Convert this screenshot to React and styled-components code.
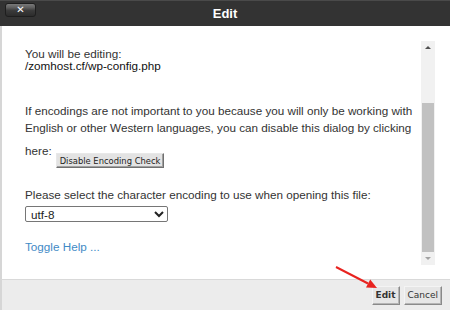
import React from "react";
import styled, { createGlobalStyle } from "styled-components";

const GlobalStyle = createGlobalStyle`
  html, body {
    margin: 0;
    padding: 0;
    background: #fff;
  }
  body {
    font-family: "Liberation Sans", Arial, sans-serif;
  }
`;

const Dialog = styled.div`
  position: relative;
  width: 450px;
  height: 310px;
  display: flex;
  flex-direction: column;
  overflow: hidden;
`;

const Header = styled.div`
  height: 26px;
  background: #333;
  border-top: 1px solid #4a4a4a;
  box-sizing: border-box;
  display: grid;
  grid-template-columns: 1fr auto 1fr;
  align-items: start;
  padding: 2px 5px 0;
`;

const CloseButton = styled.button`
  width: 31px;
  height: 14px;
  padding: 0;
  border: 1px solid #1e1e1e;
  border-radius: 3px;
  background: linear-gradient(#7a7a7a 0%, #5e5e5e 30%, #3a3a3a 55%, #2c2c2c 100%);
  color: #fff;
  font-family: "DejaVu Sans", sans-serif;
  font-weight: bold;
  font-size: 10px;
  line-height: 12px;
  display: flex;
  align-items: center;
  justify-content: center;
  justify-self: start;
`;

const Title = styled.div`
  color: #fff;
  font-weight: bold;
  font-size: 13px;
  line-height: 22px;
`;

const Body = styled.div`
  height: 253px;
  box-sizing: border-box;
  display: flex;
  border-left: 2px solid #d6d6d6;
  padding: 15px 15px 14px 23px;
  background: #fff;
`;

const Content = styled.div`
  flex: 1;
  padding-top: 7px;
  color: #333;
  font-size: 11.7px;
  line-height: 16.7px;
`;

const FileInfo = styled.div`
  line-height: 12px;
`;

const FilePath = styled.div`
  color: #111;
`;

const Para = styled.p`
  margin: ${(p) => p.$top}px 0 0;
`;

const SmallButton = styled.button`
  font-family: "DejaVu Sans", sans-serif;
  font-size: 8.4px;
  color: #222;
  height: 15px;
  padding: 0 3px;
  margin: 17px 0 0 4px;
  vertical-align: -9px;
  background: #e3e3e3;
  border: 1px solid;
  border-color: #e8e8e8 #707070 #707070 #e8e8e8;
  box-shadow: inset -1px -1px 0 #a0a0a0;
`;

const Select = styled.select`
  display: block;
  margin-top: 2px;
  width: 143px;
  height: 16px;
  font-family: "Liberation Sans", Arial, sans-serif;
  font-size: 11.7px;
  color: #222;
  border: 1px solid #767676;
  border-radius: 2px;
  padding: 0 1px;
  background: #fff;
`;

const HelpLink = styled.a`
  display: inline-block;
  margin-top: 17px;
  color: #3f8ac6;
  text-decoration: none;
`;

const ScrollBar = styled.div`
  width: 14px;
  background: #f1f1f1;
  display: flex;
  flex-direction: column;
`;

const ScrollArrow = styled.div`
  height: 13px;
  display: flex;
  align-items: center;
  justify-content: center;
  &::before {
    content: "";
    border-left: 3px solid transparent;
    border-right: 3px solid transparent;
    ${(p) =>
      p.$down
        ? "border-top: 3px solid #a3a3a3;"
        : "border-bottom: 3px solid #505050;"}
  }
`;

const Rail = styled.div`
  flex: 1;
  display: flex;
  flex-direction: column;
  padding: 0 1px;
`;

const Thumb = styled.div`
  margin-top: ${(p) => p.$offset}px;
  flex: 1;
  background: #c1c1c1;
`;

const Footer = styled.div`
  flex: 1;
  background: #ececec;
  border-top: 1px solid #d9d9d9;
  border-left: 2px solid #d6d6d6;
  display: flex;
  align-items: center;
  justify-content: flex-end;
  gap: 4px;
  padding-right: 8px;
`;

const FootButton = styled.button`
  height: 19px;
  padding: 0 3px;
  font-family: "DejaVu Sans", sans-serif;
  font-size: 9px;
  font-weight: ${(p) => (p.$primary ? "bold" : "normal")};
  color: #333;
  background: #e6e6e6;
  border: 1px solid;
  border-color: #f4f4f4 #8a8a8a #8a8a8a #f4f4f4;
  box-shadow: inset -1px -1px 0 #b5b5b5;
`;

const Pointer = styled.svg`
  position: absolute;
  left: 0;
  top: 0;
  pointer-events: none;
`;

export default function App() {
  return (
    <>
      <GlobalStyle />
      <Dialog>
        <Header>
          <CloseButton>✕</CloseButton>
          <Title>Edit</Title>
        </Header>
        <Body>
          <Content>
            <FileInfo>
              <div>You will be editing:</div>
              <FilePath>/zomhost.cf/wp-config.php</FilePath>
            </FileInfo>
            <Para $top={31}>
              If encodings are not important to you because you will only be working with
              English or other Western languages, you can disable this dialog by clicking
              here:
              <SmallButton>Disable Encoding Check</SmallButton>
            </Para>
            <Para $top={19}>
              Please select the character encoding to use when opening this file:
            </Para>
            <Select defaultValue="utf-8">
              <option value="utf-8">utf-8</option>
            </Select>
            <HelpLink href="#">Toggle Help ...</HelpLink>
          </Content>
          <ScrollBar>
            <ScrollArrow />
            <Rail>
              <Thumb $offset={49} />
            </Rail>
            <ScrollArrow $down />
          </ScrollBar>
        </Body>
        <Footer>
          <FootButton $primary>Edit</FootButton>
          <FootButton>Cancel</FootButton>
        </Footer>
        <Pointer width="450" height="310" viewBox="0 0 450 310">
          <line x1="336" y1="267" x2="368" y2="283.5" stroke="#e8231f" strokeWidth="2" />
          <polygon points="377,288 366,287.4 370.2,279.4" fill="#e8231f" />
        </Pointer>
      </Dialog>
    </>
  );
}
